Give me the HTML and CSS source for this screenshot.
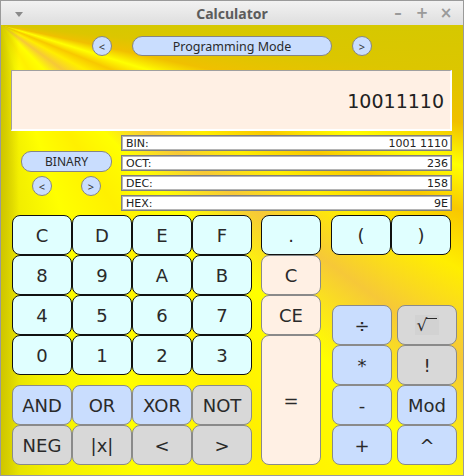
FILE: index.html
```html
<!DOCTYPE html>
<html>
<head>
<meta charset="utf-8">
<link rel="stylesheet" href="styles.css">
</head>
<body>
<div class="window">
  <div class="titlebar">
    <span class="menu-tri"></span>
    <span class="title">Calculator</span>
    <div class="wm">
      <span class="wm-btn">&#8211;</span>
      <span class="wm-btn">+</span>
      <span class="wm-btn">&#215;</span>
    </div>
  </div>
  <div class="content">
    <div class="mode-nav">
      <button class="circle">&lt;</button>
      <div class="pill mode">Programming Mode</div>
      <button class="circle">&gt;</button>
    </div>
    <div class="display">10011110</div>
    <div class="info">
      <div class="base-sel">
        <div class="pill base">BINARY</div>
        <div class="arrows">
          <button class="circle">&lt;</button>
          <button class="circle">&gt;</button>
        </div>
      </div>
      <div class="bases">
        <div class="base-row"><span>BIN:</span><span>1001 1110</span></div>
        <div class="base-row"><span>OCT:</span><span>236</span></div>
        <div class="base-row"><span>DEC:</span><span>158</span></div>
        <div class="base-row"><span>HEX:</span><span>9E</span></div>
      </div>
    </div>
    <div class="keypad">
      <div class="keys-main">
        <button class="key cyan">C</button>
        <button class="key cyan">D</button>
        <button class="key cyan">E</button>
        <button class="key cyan">F</button>
        <button class="key cyan">8</button>
        <button class="key cyan">9</button>
        <button class="key cyan">A</button>
        <button class="key cyan">B</button>
        <button class="key cyan">4</button>
        <button class="key cyan">5</button>
        <button class="key cyan">6</button>
        <button class="key cyan">7</button>
        <button class="key cyan">0</button>
        <button class="key cyan">1</button>
        <button class="key cyan">2</button>
        <button class="key cyan">3</button>
        <button class="key blue row6">AND</button>
        <button class="key blue row6">OR</button>
        <button class="key blue row6">XOR</button>
        <button class="key gray row6">NOT</button>
        <button class="key gray">NEG</button>
        <button class="key gray">|x|</button>
        <button class="key gray">&lt;</button>
        <button class="key gray">&gt;</button>
      </div>
      <div class="keys-mid">
        <button class="key cyan">.</button>
        <button class="key peach">C</button>
        <button class="key peach">CE</button>
        <button class="key peach tall">=</button>
      </div>
      <div class="keys-right">
        <div class="parens">
          <button class="key cyan">(</button>
          <button class="key cyan">)</button>
        </div>
        <div class="ops">
          <button class="key blue">&#247;</button>
          <button class="key gray"><span class="sqrt"><span class="rad">&#8730;</span><span class="vinc"></span></span></button>
          <button class="key blue">*</button>
          <button class="key gray">!</button>
          <button class="key blue">-</button>
          <button class="key blue">Mod</button>
          <button class="key blue">+</button>
          <button class="key blue">^</button>
        </div>
      </div>
    </div>
  </div>
</div>
</body>
</html>
```
FILE: styles.css
```css
* { box-sizing: border-box; }
html, body { margin: 0; padding: 0; }
body { width: 464px; height: 476px; overflow: hidden; font-family: "DejaVu Sans", sans-serif; }

.window {
  width: 464px;
  height: 476px;
  border: 1px solid #9a9a9a;
  display: flex;
  flex-direction: column;
}

.titlebar {
  height: 24px;
  flex: none;
  background: linear-gradient(#f2f2f2, #dedede);
  display: flex;
  align-items: center;
  justify-content: center;
  position: relative;
}
.menu-tri {
  position: absolute;
  left: 14px;
  top: 11px;
  width: 0; height: 0;
  border-left: 4px solid transparent;
  border-right: 4px solid transparent;
  border-top: 5px solid #8a8a8a;
}
.title {
  font-family: "Noto Sans", sans-serif;
  font-weight: bold;
  font-size: 14px;
  color: #5c5c5c;
}
.wm {
  position: absolute;
  right: 10px;
  top: 3px;
  display: flex;
  gap: 10px;
}
.wm-btn {
  width: 14px;
  text-align: center;
  font-family: "DejaVu Sans", sans-serif;
  font-weight: bold;
  font-size: 15px;
  color: #9a9a9a;
}

.content {
  flex: 1;
  display: flex;
  flex-direction: column;
  background:
    linear-gradient(to right, rgba(205,195,0,0.9) 0px, rgba(215,205,0,0) 18px),
    conic-gradient(from 90deg at 0 0,
      #d6c800 0deg, #dcc600 6deg, #f0c000 12deg, #ffff00 17deg,
      #f8c800 22deg, #ffee00 28deg, #f6c838 36deg, #ffff00 46deg,
      #fff000 58deg, #ffff00 72deg, #f2ee00 84deg, #e0dc00 90deg);
}

.mode-nav {
  margin-top: 11px;
  display: flex;
  justify-content: center;
  gap: 20px;
  height: 20px;
}
.circle {
  width: 20px;
  height: 20px;
  border-radius: 50%;
  border: 1px solid #858585;
  background: #c9ddfe;
  font-family: "Noto Sans", sans-serif;
  font-size: 11px;
  color: #333;
  padding: 0;
  display: flex;
  align-items: center;
  justify-content: center;
}
.pill {
  border: 1px solid #858585;
  background: #c9ddfe;
  border-radius: 10px;
  font-family: "Noto Sans", sans-serif;
  color: #2a2a2a;
  display: flex;
  align-items: center;
  justify-content: center;
}
.pill.mode { width: 200px; height: 20px; font-size: 12.5px; }

.display {
  margin: 14px 0 0 10px;
  width: 441px;
  height: 61px;
  background: #fff0e4;
  border-top: 1px solid #a0a0a0;
  border-left: 1px solid #a0a0a0;
  border-right: 2px solid #ffffff;
  border-bottom: 2px solid #ffffff;
  display: flex;
  align-items: center;
  justify-content: flex-end;
  padding-right: 6px;
  padding-top: 1px;
  font-size: 19px;
  color: #222;
}

.info {
  margin-top: 4px;
  display: flex;
  height: 76px;
}
.base-sel {
  width: 120px;
  padding: 16px 0 0 20px;
  display: flex;
  flex-direction: column;
}
.pill.base { width: 91px; height: 21px; font-size: 12px; }
.arrows {
  margin-top: 4px;
  display: flex;
  gap: 29px;
  padding-left: 11px;
}
.bases {
  width: 331px;
  display: flex;
  flex-direction: column;
  gap: 4px;
}
.base-row {
  height: 16px;
  background: #fff;
  border: 1px solid #808080;
  box-shadow: inset 0 0 0 1px #b4b4b4;
  display: flex;
  justify-content: space-between;
  align-items: center;
  padding: 0 3px 0 4px;
  font-size: 11px;
  color: #222;
}

.keypad {
  margin-top: 4px;
  display: flex;
  padding-left: 11px;
}
.key {
  margin: 0;
  padding: 0;
  border-radius: 8px;
  font-family: "DejaVu Sans", sans-serif;
  font-size: 18px;
  color: #2a2a2a;
  display: flex;
  align-items: center;
  justify-content: center;
  border: 1px solid #8a8a8a;
}
.cyan { background: #e0ffff; border-color: #111; }
.blue { background: #c9ddfe; }
.gray { background: #d8d8d8; }
.peach { background: #fff0e4; }

.keys-main {
  display: grid;
  grid-template-columns: repeat(4, 60px);
  grid-template-rows: 40px 40px 40px 40px 50px 40px;
}
.keys-main .row6 { margin-top: 10px; height: 40px; }

.keys-mid {
  margin-left: 9px;
  width: 60px;
  display: flex;
  flex-direction: column;
}
.keys-mid .key { height: 40px; }
.keys-mid .key.tall { height: 130px; }

.keys-right {
  margin-left: 10px;
  display: flex;
  flex-direction: column;
}
.parens { display: flex; }
.parens .key { width: 60px; height: 40px; }
.ops {
  margin: 50px 0 0 1px;
  display: grid;
  grid-template-columns: 60px 60px;
  grid-auto-rows: 40px;
  column-gap: 5px;
}
.sqrt {
  display: flex;
  align-items: flex-start;
  background: #d2d2d2;
  padding: 0 2px;
}
.rad { font-size: 17px; line-height: 20px; }
.vinc {
  width: 11px;
  height: 10px;
  margin-left: -1px;
  margin-top: 3px;
  border-top: 1px solid #2a2a2a;
}
```
